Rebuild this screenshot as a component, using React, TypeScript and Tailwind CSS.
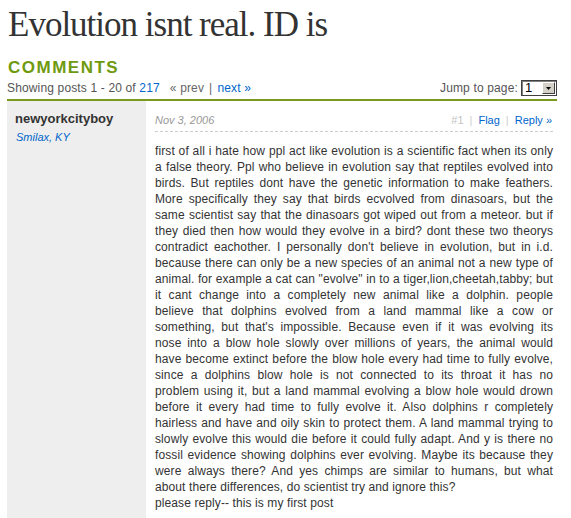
// Lines are kept as in the original post so the justified wrap matches.
const LINES = [
  'first of all i hate how ppl act like evolution is a scientific fact when its only',
  'a false theory. Ppl who believe in evolution say that reptiles evolved into',
  'birds. But reptiles dont have the genetic information to make feathers.',
  'More specifically they say that birds ecvolved from dinasoars, but the',
  'same scientist say that the dinasoars got wiped out from a meteor. but if',
  'they died then how would they evolve in a bird? dont these two theorys',
  "contradict eachother. I personally don't believe in evolution, but in i.d.",
  'because there can only be a new species of an animal not a new type of',
  'animal. for example a cat can "evolve" in to a tiger,lion,cheetah,tabby; but',
  'it cant change into a completely new animal like a dolphin. people',
  'believe that dolphins evolved from a land mammal like a cow or',
  "something, but that's impossible. Because even if it was evolving its",
  'nose into a blow hole slowly over millions of years, the animal would',
  'have become extinct before the blow hole every had time to fully evolve,',
  'since a dolphins blow hole is not connected to its throat it has no',
  'problem using it, but a land mammal evolving a blow hole would drown',
  'before it every had time to fully evolve it. Also dolphins r completely',
  'hairless and have and oily skin to protect them. A land mammal trying to',
  'slowly evolve this would die before it could fully adapt. And y is there no',
  'fossil evidence showing dolphins ever evolving. Maybe its because they',
  'were always there? And yes chimps are similar to humans, but what',
];

const TAIL = ['about there differences, do scientist try and ignore this?', 'please reply-- this is my first post'];

function PageSelect() {
  return (
    <div className="flex h-[16px] w-[36px] border border-[#404040] bg-white shadow-[inset_1px_1px_0_#808080]">
      <span className="flex-1 pl-[3px] text-[13px] leading-[14px] text-black">1</span>
      <span className="my-[1px] mr-[1px] flex w-[13px] items-center justify-center border border-t-white border-l-white border-r-[#404040] border-b-[#404040] bg-[#d4d0c8]">
        <svg width="5" height="3" viewBox="0 0 5 3">
          <path d="M0 0h5L2.5 3z" fill="#000" />
        </svg>
      </span>
    </div>
  );
}

export default function App() {
  return (
    <div className="min-h-[518px] bg-white pl-[7px] pr-[14px] font-['Liberation_Sans',Arial,sans-serif] text-[#333]">
      <h1 className="mt-[5px] pl-[1px] font-['Liberation_Serif',Georgia,serif] text-[35px] leading-[40px] tracking-[-1px] text-[#333]">
        Evolution isnt real. ID is
      </h1>

      <h2 className="mt-[13px] pl-[1px] text-[17px] font-bold leading-[20px] tracking-[1.5px] text-[#6f9a10]">
        COMMENTS
      </h2>

      <div className="mt-[2px] flex items-end justify-between border-b-2 border-[#7a9a1c] pb-[3px] text-[12px] leading-[16px] tracking-[0.15px] text-[#555]">
        <div>
          Showing posts 1 - 20 of <a href="#" className="text-[#0066cc]">217</a>
          <span className="ml-[10px] text-[#666]">« prev</span>
          <span className="mx-[5px] text-[#666]">|</span>
          <a href="#" className="text-[#0066cc]">next »</a>
        </div>
        <div className="flex items-center gap-[3px]">
          <span>Jump to page:</span>
          <PageSelect />
        </div>
      </div>

      <div className="flex">
        <div className="w-[139px] shrink-0 bg-[#eee] px-[8px] pt-[10px]">
          <div className="text-[13px] font-bold leading-[16px] text-[#333]">newyorkcityboy</div>
          <div className="mt-[2px] pl-[1px] text-[11px] italic leading-[16px] text-[#0066cc]">Smilax, KY</div>
        </div>

        <div className="ml-[9px] flex-1 pr-[4px] pt-[12px] pb-[16px]">
          <div className="flex items-end justify-between border-b border-dashed border-[#ccc] pb-[4px] pr-[1px]">
            <span className="text-[11px] italic leading-[14px] text-[#999]">Nov 3, 2006</span>
            <span className="text-[11px] leading-[14px]">
              <span className="text-[#c4c4c4]">#1</span>
              <span className="mx-[6px] text-[#ccc]">|</span>
              <a href="#" className="text-[#0066cc]">Flag</a>
              <span className="mx-[6px] text-[#ccc]">|</span>
              <a href="#" className="text-[#0066cc]">Reply »</a>
            </span>
          </div>
          <div className="mt-[11px] text-[12px] leading-[16px] tracking-[0.1px] text-[#333]">
            {LINES.map((l, i) => (
              <div key={i} className="text-justify [text-align-last:justify]">
                {l}
              </div>
            ))}
            {TAIL.map((l, i) => (
              <div key={i}>{l}</div>
            ))}
          </div>
        </div>
      </div>
    </div>
  );
}
